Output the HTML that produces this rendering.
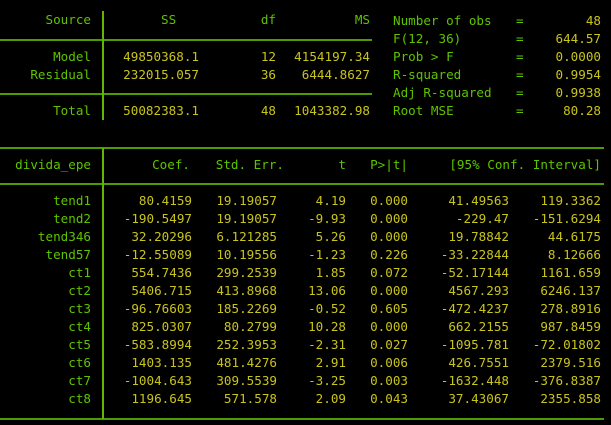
<!DOCTYPE html>
<html><head><meta charset="utf-8"><style>
body{margin:0;background:#000;width:611px;height:425px;overflow:hidden;position:relative;font-family:"DejaVu Sans Mono","Liberation Mono",monospace;font-size:12.6px}
div{position:absolute;line-height:18px;white-space:pre}
.g{color:#5fc300}.y{color:#c9c41c}
.h{height:2px;background:#4f9a00;line-height:0}
.v{width:1.5px;background:#5fb800;line-height:0}
</style></head><body>
<div class="h" style="left:0;top:39px;width:372px"></div>
<div class="h" style="left:0;top:93px;width:372px"></div>
<div class="v" style="left:102px;top:11px;height:109px"></div>
<div class="h" style="left:0;top:147px;width:604px"></div>
<div class="h" style="left:0;top:183px;width:604px"></div>
<div class="h" style="left:0;top:418px;width:604px"></div>
<div class="v" style="left:102px;top:148px;height:271px"></div>

<div class="g" style="right:520px;top:11px">Source</div>
<div class="g" style="left:161px;top:11px">SS</div>
<div class="g" style="right:335px;top:11px">df</div>
<div class="g" style="right:241px;top:11px">MS</div>

<div class="g" style="right:520px;top:48px">Model</div>
<div class="y" style="right:412px;top:48px">49850368.1</div>
<div class="y" style="right:335px;top:48px">12</div>
<div class="y" style="right:241px;top:48px">4154197.34</div>
<div class="g" style="right:520px;top:66px">Residual</div>
<div class="y" style="right:412px;top:66px">232015.057</div>
<div class="y" style="right:335px;top:66px">36</div>
<div class="y" style="right:241px;top:66px">6444.8627</div>
<div class="g" style="right:520px;top:102px">Total</div>
<div class="y" style="right:412px;top:102px">50082383.1</div>
<div class="y" style="right:335px;top:102px">48</div>
<div class="y" style="right:241px;top:102px">1043382.98</div>

<div class="g" style="left:393px;top:12px">Number of obs
F(12, 36)
Prob &gt; F
R-squared
Adj R-squared
Root MSE</div>
<div class="g" style="left:516px;top:12px">=
=
=
=
=
=</div>
<div class="y" style="right:10px;top:12px;text-align:right">48
644.57
0.0000
0.9954
0.9938
80.28</div>

<div class="g" style="right:520px;top:156px">divida_epe</div>
<div class="g" style="right:421px;top:156px">Coef.</div>
<div class="g" style="right:327px;top:156px">Std. Err.</div>
<div class="g" style="right:265px;top:156px">t</div>
<div class="g" style="right:203px;top:156px">P&gt;|t|</div>
<div class="g" style="right:10px;top:156px">[95% Conf. Interval]</div>

<div class="g" style="right:520px;top:192px;text-align:right">tend1
tend2
tend346
tend57
ct1
ct2
ct3
ct4
ct5
ct6
ct7
ct8</div>
<div class="y" style="right:419px;top:192px;text-align:right">80.4159
-190.5497
32.20296
-12.55089
554.7436
5406.715
-96.76603
825.0307
-583.8994
1403.135
-1004.643
1196.645</div>
<div class="y" style="right:334px;top:192px;text-align:right">19.19057
19.19057
6.121285
10.19556
299.2539
413.8968
185.2269
80.2799
252.3953
481.4276
309.5539
571.578</div>
<div class="y" style="right:265px;top:192px;text-align:right">4.19
-9.93
5.26
-1.23
1.85
13.06
-0.52
10.28
-2.31
2.91
-3.25
2.09</div>
<div class="y" style="right:203px;top:192px;text-align:right">0.000
0.000
0.000
0.226
0.072
0.000
0.605
0.000
0.027
0.006
0.003
0.043</div>
<div class="y" style="right:102px;top:192px;text-align:right">41.49563
-229.47
19.78842
-33.22844
-52.17144
4567.293
-472.4237
662.2155
-1095.781
426.7551
-1632.448
37.43067</div>
<div class="y" style="right:10px;top:192px;text-align:right">119.3362
-151.6294
44.6175
8.12666
1161.659
6246.137
278.8916
987.8459
-72.01802
2379.516
-376.8387
2355.858</div>
</body></html>
